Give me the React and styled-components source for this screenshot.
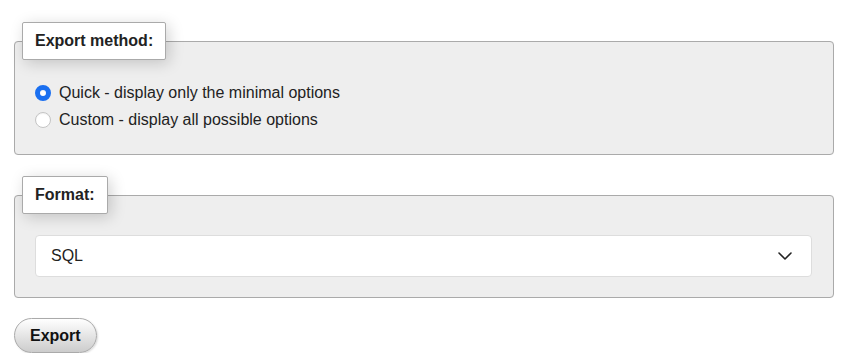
import React, { useState } from 'react';
import styled, { createGlobalStyle } from 'styled-components';

const GlobalStyle = createGlobalStyle`
  html, body {
    margin: 0;
    padding: 0;
    background: #fff;
  }
  body {
    font-family: 'Liberation Sans', Arial, sans-serif;
    font-size: 16px;
    color: #222;
  }
`;

const Page = styled.div`
  padding: 22px 11px 0 14px;
`;

const Fieldset = styled.fieldset`
  margin: 0 0 21px 0;
  padding: 0;
  min-width: 0;
  background: #eee;
  border: 1px solid #aaa;
  border-radius: 4px;
`;

const Legend = styled.legend`
  margin-left: 7px;
  padding: 8px 12px;
  line-height: 20px;
  font-size: 16px;
  font-weight: bold;
  color: #222;
  background: #fff;
  border: 1px solid #aaa;
  border-radius: 2px;
  box-shadow: 3px 3px 15px rgba(0, 0, 0, 0.18);
`;

const Body = styled.div`
  padding: ${(p) => p.$pad};
`;

const RadioRow = styled.label`
  display: flex;
  align-items: center;
  height: 27px;
  gap: 8px;
  cursor: pointer;
`;

const Radio = styled.input.attrs({ type: 'radio' })`
  appearance: none;
  margin: 0;
  width: 16px;
  height: 16px;
  border-radius: 50%;
  border: 1px solid #c4c4c4;
  background: #fff;
  box-shadow: inset 0 1px 1px rgba(0, 0, 0, 0.05);

  &:checked {
    border: 5px solid #1a6ff0;
    background: #fff;
  }
`;

const SelectBox = styled.div`
  display: flex;
  align-items: center;
  justify-content: space-between;
  height: 40px;
  padding: 0 19px 0 15px;
  background: #fff;
  border: 1px solid #ddd;
  border-radius: 4px;
  font-size: 16px;
  color: #222;
`;

const Chevron = () => (
  <svg width="14" height="8" viewBox="0 0 14 8" fill="none">
    <path d="M1 1l6 6 6-6" stroke="#222" strokeWidth="1.6" strokeLinecap="round" strokeLinejoin="round" />
  </svg>
);

const Button = styled.button`
  margin-top: -1px;
  height: 35px;
  padding: 0 15px;
  font-family: 'Liberation Sans', Arial, sans-serif;
  font-size: 16px;
  font-weight: bold;
  color: #111;
  border: 1px solid #aaa;
  border-radius: 20px;
  background: linear-gradient(#fff, #ccc);
  box-shadow: 1px 1px 2px rgba(0, 0, 0, 0.15);
  cursor: pointer;
`;

const methods = [
  { id: 'quick', label: 'Quick - display only the minimal options' },
  { id: 'custom', label: 'Custom - display all possible options' },
];

export default function App() {
  const [method, setMethod] = useState('quick');
  return (
    <>
      <GlobalStyle />
      <Page>
        <Fieldset>
          <Legend>Export method:</Legend>
          <Body $pad="19px 20px 21px 20px">
            {methods.map((m) => (
              <RadioRow key={m.id}>
                <Radio name="method" checked={method === m.id} onChange={() => setMethod(m.id)} />
                {m.label}
              </RadioRow>
            ))}
          </Body>
        </Fieldset>
        <Fieldset>
          <Legend>Format:</Legend>
          <Body $pad="21px 21px 20px 20px">
            <SelectBox>
              SQL
              <Chevron />
            </SelectBox>
          </Body>
        </Fieldset>
        <Button>Export</Button>
      </Page>
    </>
  );
}
